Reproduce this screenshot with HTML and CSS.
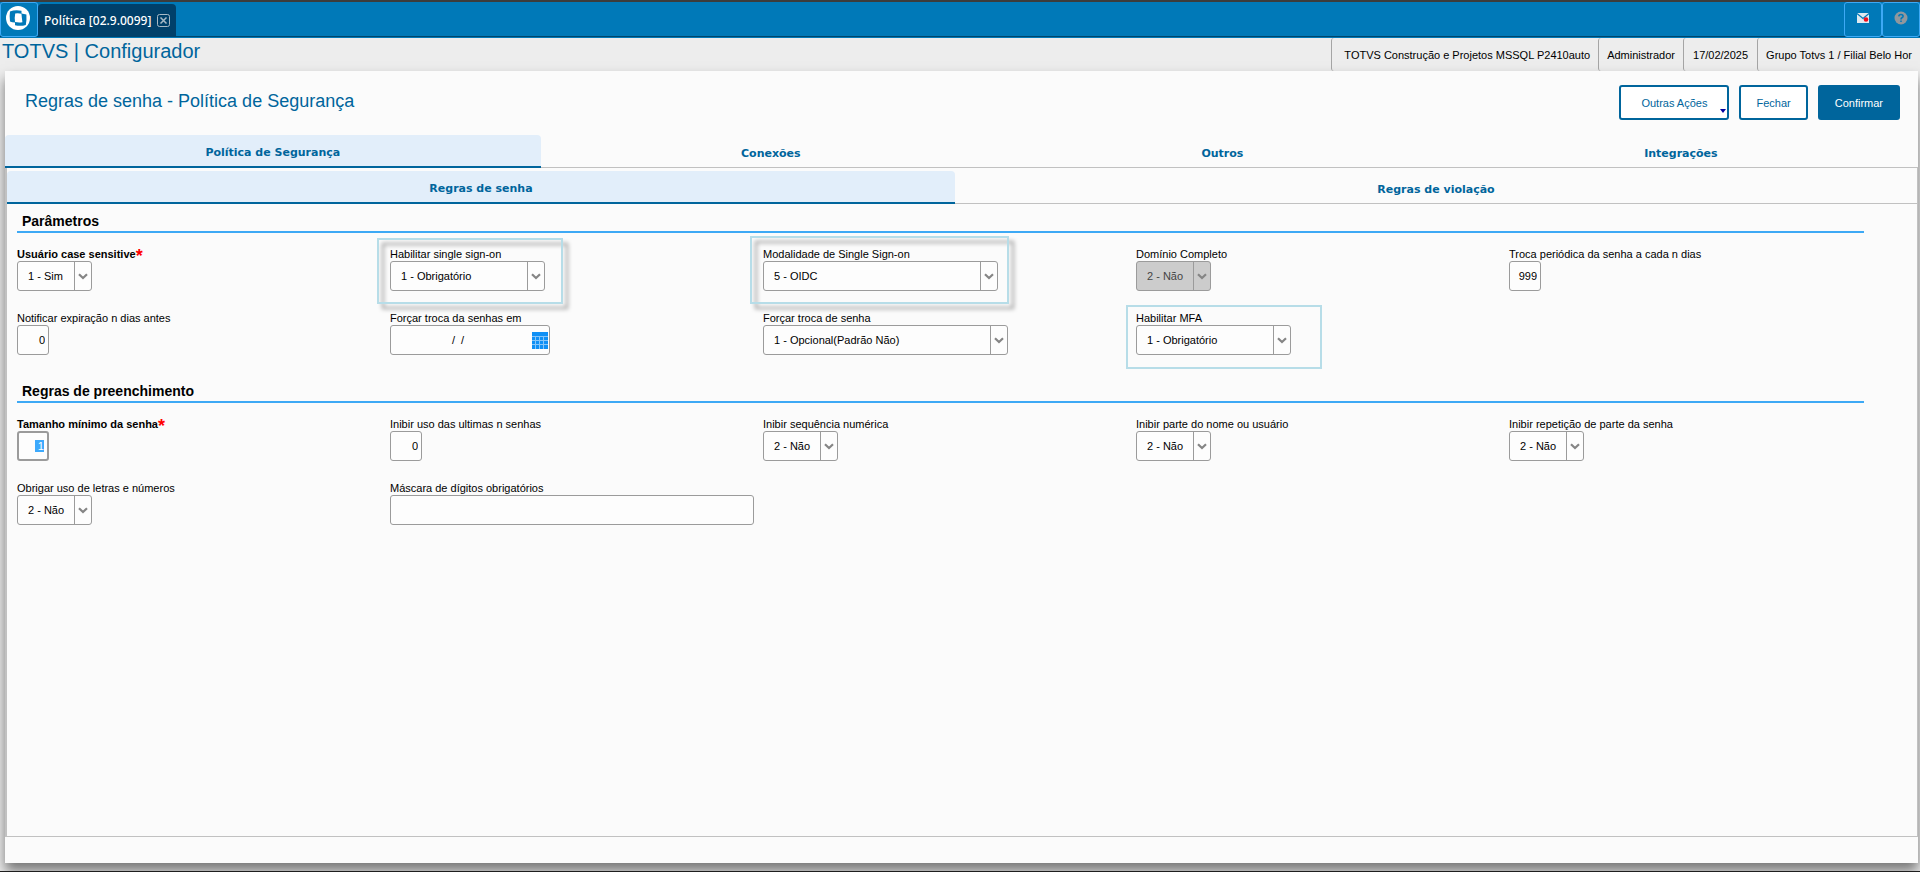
FILE: index.html
```html
<!DOCTYPE html>
<html lang="pt-BR">
<head>
    <meta charset="UTF-8">
    <meta name="viewport" content="width=device-width, initial-scale=1.0">
    <title>TOTVS | Configurador</title>
    <link rel="stylesheet" href="styles.css">
</head>
<body onload="initialize()">
    <svg class="symbols" aria-hidden="true">
        <symbol id="chevron" viewBox="0 0 10 7">
            <path d="M1 1.2 L5 5 L9 1.2" fill="none" stroke="#858585" stroke-width="2.2"/>
        </symbol>
    </svg>

    <!-- Top bar -->
    <header class="topbar">
        <button class="logo" aria-label="TOTVS">
            <svg width="24" height="24" viewBox="0 0 24 24">
                <circle cx="12" cy="12" r="12" fill="#fff"/>
                <path d="M4 5.5 Q9 3.6 15.5 4.8 V7.4 Q18 7.6 20.4 8.6 Q20.8 14 19.8 19 Q14.5 20.6 9 19.2 V16.6 Q6 16.4 4 15.4 Q3.2 10.5 4 5.5 Z" fill="#0079b8"/>
                <path d="M9.2 7.6 Q12 7 15.4 7.8 L16.4 16.2 Q12.8 16.8 9 16 Q8.4 11.8 9.2 7.6 Z" fill="#fff"/>
            </svg>
        </button>
        <div class="window-tab">
            <span>Política [02.9.0099]</span>
            <button class="close" aria-label="Fechar aba">
                <svg width="13" height="13" viewBox="0 0 13 13" fill="none" stroke="#a9bac6">
                    <rect x="0.5" y="0.5" width="12" height="12" rx="2"/>
                    <path d="M3.5 3.5 L9.5 9.5 M9.5 3.5 L3.5 9.5" stroke-width="1.5"/>
                </svg>
            </button>
        </div>
        <div class="tools">
            <button aria-label="Mensagens">
                <svg width="14" height="12" viewBox="0 0 14 12">
                    <rect x="1" y="1" width="12" height="10" fill="#dfe9ef"/>
                    <path d="M1 1.5 L7 6.5 L13 1.5" fill="none" stroke="#0079b8" stroke-width="1.2"/>
                    <circle cx="10" cy="7.5" r="2.3" fill="#f00d1c"/>
                </svg>
            </button>
            <button aria-label="Ajuda">
                <svg width="14" height="14" viewBox="0 0 14 14">
                    <circle cx="7" cy="7" r="6.5" fill="#8f979d"/>
                    <path d="M4.8 5.4 Q4.9 3.5 7 3.5 Q9.1 3.5 9.1 5.2 Q9.1 6.2 7.9 6.8 Q7 7.3 7 8.5 M7 9.5 V11" fill="none" stroke="#0079b8" stroke-width="1.6"/>
                </svg>
            </button>
        </div>
    </header>

    <!-- Environment info -->
    <div class="infobar">
        <h1>TOTVS | Configurador</h1>
        <ul class="info">
            <li>TOTVS Construção e Projetos MSSQL P2410auto</li>
            <li>Administrador</li>
            <li>17/02/2025</li>
            <li>Grupo Totvs 1 / Filial Belo Hor</li>
        </ul>
    </div>

    <main class="card">
        <div class="card-header">
            <h2>Regras de senha - Política de Segurança</h2>
            <div class="actions">
                <button class="btn btn-menu">Outras Ações</button>
                <button class="btn">Fechar</button>
                <button class="btn btn-primary">Confirmar</button>
            </div>
        </div>

        <nav class="tabs">
            <button class="tab active">Política de Segurança</button>
            <button class="tab">Conexões</button>
            <button class="tab">Outros</button>
            <button class="tab">Integrações</button>
        </nav>

        <div class="panel">
            <nav class="tabs subtabs">
                <button class="tab active">Regras de senha</button>
                <button class="tab">Regras de violação</button>
            </nav>

            <section>
                <h3>Parâmetros</h3>
                <div class="fields">
                    <div class="field required">
                        <label for="caseSensitive">Usuário case sensitive</label>
                        <div class="select w-small"><select id="caseSensitive"><option>1 - Sim</option></select><svg><use href="#chevron"/></svg></div>
                    </div>
                    <div class="field">
                        <label for="sso">Habilitar single sign-on</label>
                        <div class="select w-medium"><select id="sso"><option>1 - Obrigatório</option></select><svg><use href="#chevron"/></svg></div>
                        <span class="mark mark-sso"></span>
                    </div>
                    <div class="field">
                        <label for="ssoMode">Modalidade de Single Sign-on</label>
                        <div class="select w-large"><select id="ssoMode"><option>5 - OIDC</option></select><svg><use href="#chevron"/></svg></div>
                        <span class="mark mark-mode"></span>
                    </div>
                    <div class="field">
                        <label for="fullDomain">Domínio Completo</label>
                        <div class="select w-small"><select id="fullDomain" disabled><option>2 - Não</option></select><svg><use href="#chevron"/></svg></div>
                    </div>
                    <div class="field">
                        <label for="changeDays">Troca periódica da senha a cada n dias</label>
                        <input type="text" id="changeDays" class="number" value="999">
                    </div>
                    <div class="field">
                        <label for="notifyDays">Notificar expiração n dias antes</label>
                        <input type="text" id="notifyDays" class="number" value="0">
                    </div>
                    <div class="field">
                        <label for="forceDate">Forçar troca da senhas em</label>
                        <div class="date">
                            <input type="text" id="forceDate" value="/  /">
                            <svg width="16" height="17" viewBox="0 0 16 17">
                                <rect width="16" height="17" fill="#1090f5"/>
                                <path d="M0 4.5 H16 M0 8.5 H16 M0 12.5 H16 M3.5 4 V17 M7.5 4 V17 M11.5 4 V17" stroke="#86c6fa"/>
                            </svg>
                        </div>
                    </div>
                    <div class="field">
                        <label for="forceChange">Forçar troca de senha</label>
                        <div class="select w-xlarge"><select id="forceChange"><option>1 - Opcional(Padrão Não)</option></select><svg><use href="#chevron"/></svg></div>
                    </div>
                    <div class="field">
                        <label for="mfa">Habilitar MFA</label>
                        <div class="select w-medium"><select id="mfa"><option>1 - Obrigatório</option></select><svg><use href="#chevron"/></svg></div>
                        <span class="mark mark-mfa"></span>
                    </div>
                </div>
            </section>

            <section>
                <h3>Regras de preenchimento</h3>
                <div class="fields">
                    <div class="field required">
                        <label for="minLength">Tamanho mínimo da senha</label>
                        <input type="text" id="minLength" class="number" value=" 1">
                    </div>
                    <div class="field">
                        <label for="lastPasswords">Inibir uso das ultimas n senhas</label>
                        <input type="text" id="lastPasswords" class="number" value="0">
                    </div>
                    <div class="field">
                        <label for="sequence">Inibir sequência numérica</label>
                        <div class="select w-small"><select id="sequence"><option>2 - Não</option></select><svg><use href="#chevron"/></svg></div>
                    </div>
                    <div class="field">
                        <label for="namePart">Inibir parte do nome ou usuário</label>
                        <div class="select w-small"><select id="namePart"><option>2 - Não</option></select><svg><use href="#chevron"/></svg></div>
                    </div>
                    <div class="field">
                        <label for="repeatPart">Inibir repetição de parte da senha</label>
                        <div class="select w-small"><select id="repeatPart"><option>2 - Não</option></select><svg><use href="#chevron"/></svg></div>
                    </div>
                    <div class="field">
                        <label for="letters">Obrigar uso de letras e números</label>
                        <div class="select w-small"><select id="letters"><option>2 - Não</option></select><svg><use href="#chevron"/></svg></div>
                    </div>
                    <div class="field">
                        <label for="digitMask">Máscara de dígitos obrigatórios</label>
                        <input type="text" id="digitMask" class="mask">
                    </div>
                </div>
            </section>
        </div>
    </main>

    <script>
        function initialize() {
            const field = document.getElementById('minLength');
            field.focus();
            field.select();
        }
    </script>
</body>
</html>
```
FILE: styles.css
```css
* { box-sizing: border-box; }
body {
    font-family: Arial, "Liberation Sans", sans-serif;
    font-size: 11px;
    color: #000;
    background-color: #ededed;
    display: flex;
    flex-direction: column;
    min-height: 100vh;
    margin: 0;
    border-top: 2px solid #3c3c3c;
    border-bottom: 1px solid #1e1e1e;
}
button, input, select { font: inherit; color: inherit; }
button { cursor: pointer; }
.symbols { position: absolute; width: 0; height: 0; }

/* Top bar */
.topbar {
    display: flex;
    height: 36px;
    background-color: #0079b8;
    border-bottom: 1px solid #0079b8;
    box-shadow: inset 0 -1px #00466b;
}
.logo, .tools button {
    display: flex;
    align-items: center;
    justify-content: center;
    width: 38px;
    padding: 0 0 3px;
    background-color: #0079b8;
    border: 1px solid #3da9f5;
    border-radius: 3px;
}
.logo { padding-right: 2px; }
.tools { display: flex; margin-left: auto; }
.window-tab {
    display: flex;
    align-items: center;
    gap: 6px;
    margin-top: 2px;
    padding: 0 6px;
    background-color: #00406a;
    border-radius: 4px 4px 0 0;
    color: #fff;
    font: 500 12px "Noto Sans", sans-serif;
}
.close { display: flex; padding: 0; background: none; border: none; }

/* Info bar */
.infobar { display: flex; justify-content: space-between; height: 33px; }
h1 { margin: 1px 2px; font-size: 20px; line-height: 24px; font-weight: normal; color: #00659c; }
.info { display: flex; margin: 0; padding: 0; list-style: none; line-height: 34px; }
.info li { padding: 0 8px; border-left: 1px solid #a5a5a5; border-radius: 3px; }
.info li:first-child { padding-left: 12px; }
.info li:nth-child(3) { padding: 0 9px; }

/* Card */
.card {
    flex: 1;
    display: flex;
    flex-direction: column;
    margin: 0 2px 8px 5px;
    padding-bottom: 26px;
    background-color: #fbfbfb;
    box-shadow: 0 8px 12px rgba(0, 0, 0, 0.5);
}
.card-header {
    display: flex;
    justify-content: space-between;
    height: 64px;
    padding: 14px 18px 0 20px;
}
h2 { margin: 6px 0; font-size: 18px; line-height: 20px; font-weight: normal; color: #00659c; }
.actions { display: flex; gap: 10px; }
.btn {
    position: relative;
    height: 35px;
    padding: 0 15px;
    background-color: #fff;
    border: 2px solid #00659c;
    border-radius: 3px;
    color: #00659c;
}
.btn-menu { padding: 0 20px; }
.btn-menu::after {
    content: "";
    position: absolute;
    right: 1px;
    bottom: 5px;
    border: 3px solid transparent;
    border-top: 4px solid #0000a0;
    border-bottom: none;
}
.btn-primary { background-color: #00659c; color: #fff; }

/* Tabs */
.tabs { display: flex; height: 33px; box-shadow: inset 0 -1px #c1c1c1; }
.tab {
    flex: 1 1 auto;
    padding: 4px 0 0;
    background: none;
    border: none;
    color: #00659c;
    font: bold 11px "DejaVu Sans", sans-serif;
}
.tab.active {
    padding: 3px 0 0;
    background-color: #e2eefa;
    border-bottom: 2px solid #00659c;
    border-radius: 4px 4px 0 0;
}
.subtabs { margin-top: 3px; }

/* Form */
.panel {
    flex: 1;
    border: 1px solid #c1c1c1;
    border-top: none;
    border-left-width: 2px;
}
section { margin: 9px 53px 0 10px; }
section + section { margin-top: 28px; }
h3 {
    margin: 0 0 14px;
    padding: 0 5px 2px;
    border-bottom: 2px solid #3da9f5;
    font-size: 14px;
    line-height: 16px;
}
.fields {
    display: grid;
    grid-template-columns: repeat(5, minmax(0, 1fr));
    gap: 20px 18px;
}
.field { position: relative; height: 44px; white-space: nowrap; }
.field label { display: flex; height: 14px; line-height: 14px; }
.required label { font-weight: bold; }
.required label::after { content: "*"; color: #f00; font-size: 18px; line-height: 18px; }
.field input, .field select {
    display: block;
    height: 30px;
    padding: 0 8px;
    background-color: #fdfdfd;
    border: 1px solid #9b9b9b;
    border-radius: 3px;
    outline: none;
}
.field .number { width: 32px; padding: 0 3px; text-align: right; }
.field .number:focus { border-width: 2px; padding: 0 3px 0 2px; }
.field .mask { width: 364px; }
::selection { background-color: #3da9fc; color: #fff; }

.select { position: relative; }
.select select { appearance: none; width: 100%; padding: 0 20px 0 10px; }
.select select:disabled { background-color: #ccc; color: #444; opacity: 1; }
.select::after {
    content: "";
    position: absolute;
    top: 1px;
    bottom: 1px;
    right: 17px;
    border-left: 1px solid #9b9b9b;
}
.select svg {
    position: absolute;
    top: 12px;
    right: 4px;
    width: 10px;
    height: 7px;
    pointer-events: none;
}
.w-small { width: 75px; }
.w-medium { width: 155px; }
.w-large { width: 235px; }
.w-xlarge { width: 245px; }

.date { position: relative; width: 160px; }
.date input { width: 100%; padding-right: 32px; text-align: center; white-space: pre; }
.date svg { position: absolute; top: 7px; right: 2px; }

/* Highlighted fields */
.mark {
    position: absolute;
    top: -9px;
    left: -13px;
    height: 66px;
    border: 2px solid #b7dde8;
    pointer-events: none;
}
.mark-sso { width: 186px; filter: drop-shadow(5px 5px 2px rgba(0, 0, 0, 0.4)); }
.mark-mode { top: -11px; width: 259px; height: 68px; filter: drop-shadow(5px 5px 2px rgba(0, 0, 0, 0.4)); }
.mark-mfa { top: -6px; left: -10px; width: 196px; height: 64px; }
```
